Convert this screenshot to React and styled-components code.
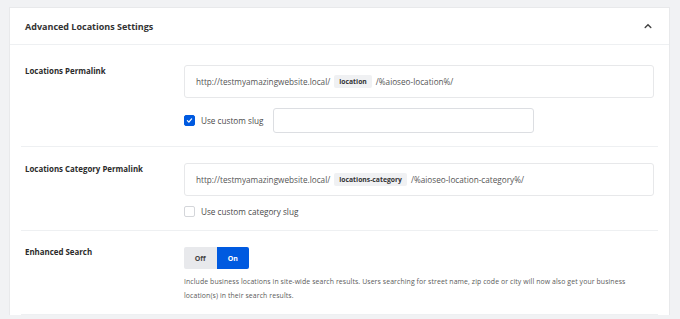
import React, { useState } from "react";
import styled, { createGlobalStyle } from "styled-components";

const GlobalStyle = createGlobalStyle`
  html, body {
    margin: 0;
    padding: 0;
    background: #f1f2f4;
    font-family: "Open Sans", "Noto Sans", sans-serif;
  }
`;

const Page = styled.div`
  padding: 7px 10px 0 9px;
  height: 319px;
  box-sizing: border-box;
  overflow: hidden;
`;

const Card = styled.section`
  background: #fff;
  border: 1px solid #e8e9eb;
  border-bottom: none;
  width: 661px;
  box-sizing: border-box;
`;

const Header = styled.div`
  height: 37px;
  display: flex;
  align-items: center;
  justify-content: space-between;
  padding: 0 17px 0 15px;
  border-bottom: 1px solid #eef0f2;
  box-sizing: border-box;
`;

const Title = styled.h2`
  margin: 0;
  font-size: 9px;
  font-weight: 700;
  color: #333;
`;

const Body = styled.div`
  padding: 0 11px;
`;

const Row = styled.div`
  display: grid;
  grid-template-columns: 159px 1fr;
  padding: ${(p) => (p.first ? "20px" : "16px")} 4px ${(p) => p.bottom || "13px"} 4px;
  border-bottom: 1px solid #eef0f2;
`;

const Label = styled.div`
  font-size: 7.9px;
  font-weight: 700;
  color: #2b2b2b;
  padding-top: ${(p) => p.offset || "1px"};
  line-height: 11px;
`;

const Content = styled.div`
  display: flex;
  flex-direction: column;
  gap: 10px;
`;

const PermaBox = styled.div`
  height: 33px;
  border: 1px solid #e7e8ea;
  border-radius: 3px;
  display: flex;
  align-items: center;
  padding-left: 11px;
  box-sizing: border-box;
  font-size: 8.2px;
  color: #555;
  gap: 4px;
`;

const Tag = styled.span`
  background: #f0f1f3;
  border-radius: 2px;
  font-size: 6.8px;
  font-weight: 700;
  color: #333;
  padding: 0 5px;
  height: 13px;
  line-height: 13px;
`;

const CheckRow = styled.div`
  display: flex;
  align-items: center;
  gap: 6px;
  font-size: 8.2px;
  color: #4a4a4a;
`;

const Box = styled.span`
  width: 11px;
  height: 11px;
  border-radius: 2px;
  box-sizing: border-box;
  border: 1px solid ${(p) => (p.checked ? "#005ae0" : "#d4d6da")};
  background: ${(p) => (p.checked ? "#005ae0" : "#fff")};
  display: flex;
  align-items: center;
  justify-content: center;
`;

const SlugInput = styled.div`
  width: 261px;
  height: 25px;
  border: 1px solid #dcdee2;
  border-radius: 3px;
  box-sizing: border-box;
  margin-left: 4px;
`;

const Toggle = styled.div`
  display: flex;
  width: 65px;
  height: 22px;
  border-radius: 2px;
  overflow: hidden;
`;

const ToggleBtn = styled.span`
  flex: 1;
  display: flex;
  align-items: center;
  justify-content: center;
  font-size: 7px;
  font-weight: 700;
  cursor: pointer;
  background: ${(p) => (p.active ? "#005ae0" : "#e8e9ec")};
  color: ${(p) => (p.active ? "#fff" : "#444")};
`;

const Desc = styled.p`
  margin: 0;
  margin-top: -4px;
  font-size: 6.9px;
  line-height: 14px;
  color: #5a5a5a;
  letter-spacing: 0.1px;
  white-space: nowrap;
`;

const Check = () => (
  <svg width="7" height="7" viewBox="0 0 10 10">
    <path d="M2 5.2 L4.1 7.3 L8 2.8" stroke="#fff" strokeWidth="1.8" fill="none" strokeLinecap="round" strokeLinejoin="round" />
  </svg>
);

const Chevron = () => (
  <svg width="8" height="6" viewBox="0 0 10 6">
    <path d="M1.5 5 L5 1.5 L8.5 5" stroke="#444" strokeWidth="1.8" fill="none" strokeLinecap="round" />
  </svg>
);

const App = () => {
  const [on, setOn] = useState(true);
  return (
    <>
      <GlobalStyle />
      <Page>
        <Card>
          <Header>
            <Title>Advanced Locations Settings</Title>
            <Chevron />
          </Header>
          <Body>
            <Row first>
              <Label>Locations Permalink</Label>
              <Content>
                <PermaBox>
                  <span>http://testmyamazingwebsite.local/</span>
                  <Tag>location</Tag>
                  <span>/%aioseo-location%/</span>
                </PermaBox>
                <CheckRow>
                  <Box checked>
                    <Check />
                  </Box>
                  Use custom slug
                  <SlugInput />
                </CheckRow>
              </Content>
            </Row>
            <Row>
              <Label>Locations Category Permalink</Label>
              <Content>
                <PermaBox>
                  <span>http://testmyamazingwebsite.local/</span>
                  <Tag>locations-category</Tag>
                  <span>/%aioseo-location-category%/</span>
                </PermaBox>
                <CheckRow>
                  <Box />
                  Use custom category slug
                </CheckRow>
              </Content>
            </Row>
            <Row bottom="11px">
              <Label offset="0px">Enhanced Search</Label>
              <Content>
                <Toggle>
                  <ToggleBtn active={!on} onClick={() => setOn(false)}>Off</ToggleBtn>
                  <ToggleBtn active={on} onClick={() => setOn(true)}>On</ToggleBtn>
                </Toggle>
                <Desc>
                  Include business locations in site-wide search results. Users searching for street name, zip code or city will now also get your business
                  <br />
                  location(s) in their search results.
                </Desc>
              </Content>
            </Row>
          </Body>
        </Card>
      </Page>
    </>
  );
};

export default App;
